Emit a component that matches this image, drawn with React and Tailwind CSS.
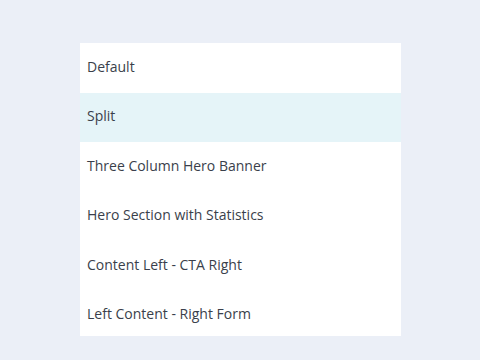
import React from 'react'

const items = [
  'Default',
  'Split',
  'Three Column Hero Banner',
  'Hero Section with Statistics',
  'Content Left - CTA Right',
  'Left Content - Right Form',
]

export default function App() {
  return (
    <div className="w-[480px] h-[360px] bg-[#ebeff7] pt-[43px] pl-[80px]" style={{ fontFamily: '"Open Sans", Lato, sans-serif' }}>
      <ul className="w-[321px] h-[293px] overflow-hidden bg-white">
        {items.map((label) => (
          <li
            key={label}
            className={`h-[49.5px] flex items-center pl-[7px] pb-[3px] text-[14px] text-[#3a3f4b] ${
              label === 'Split' ? 'bg-[#e5f4f8]' : ''
            }`}
          >
            {label}
          </li>
        ))}
      </ul>
    </div>
  )
}
